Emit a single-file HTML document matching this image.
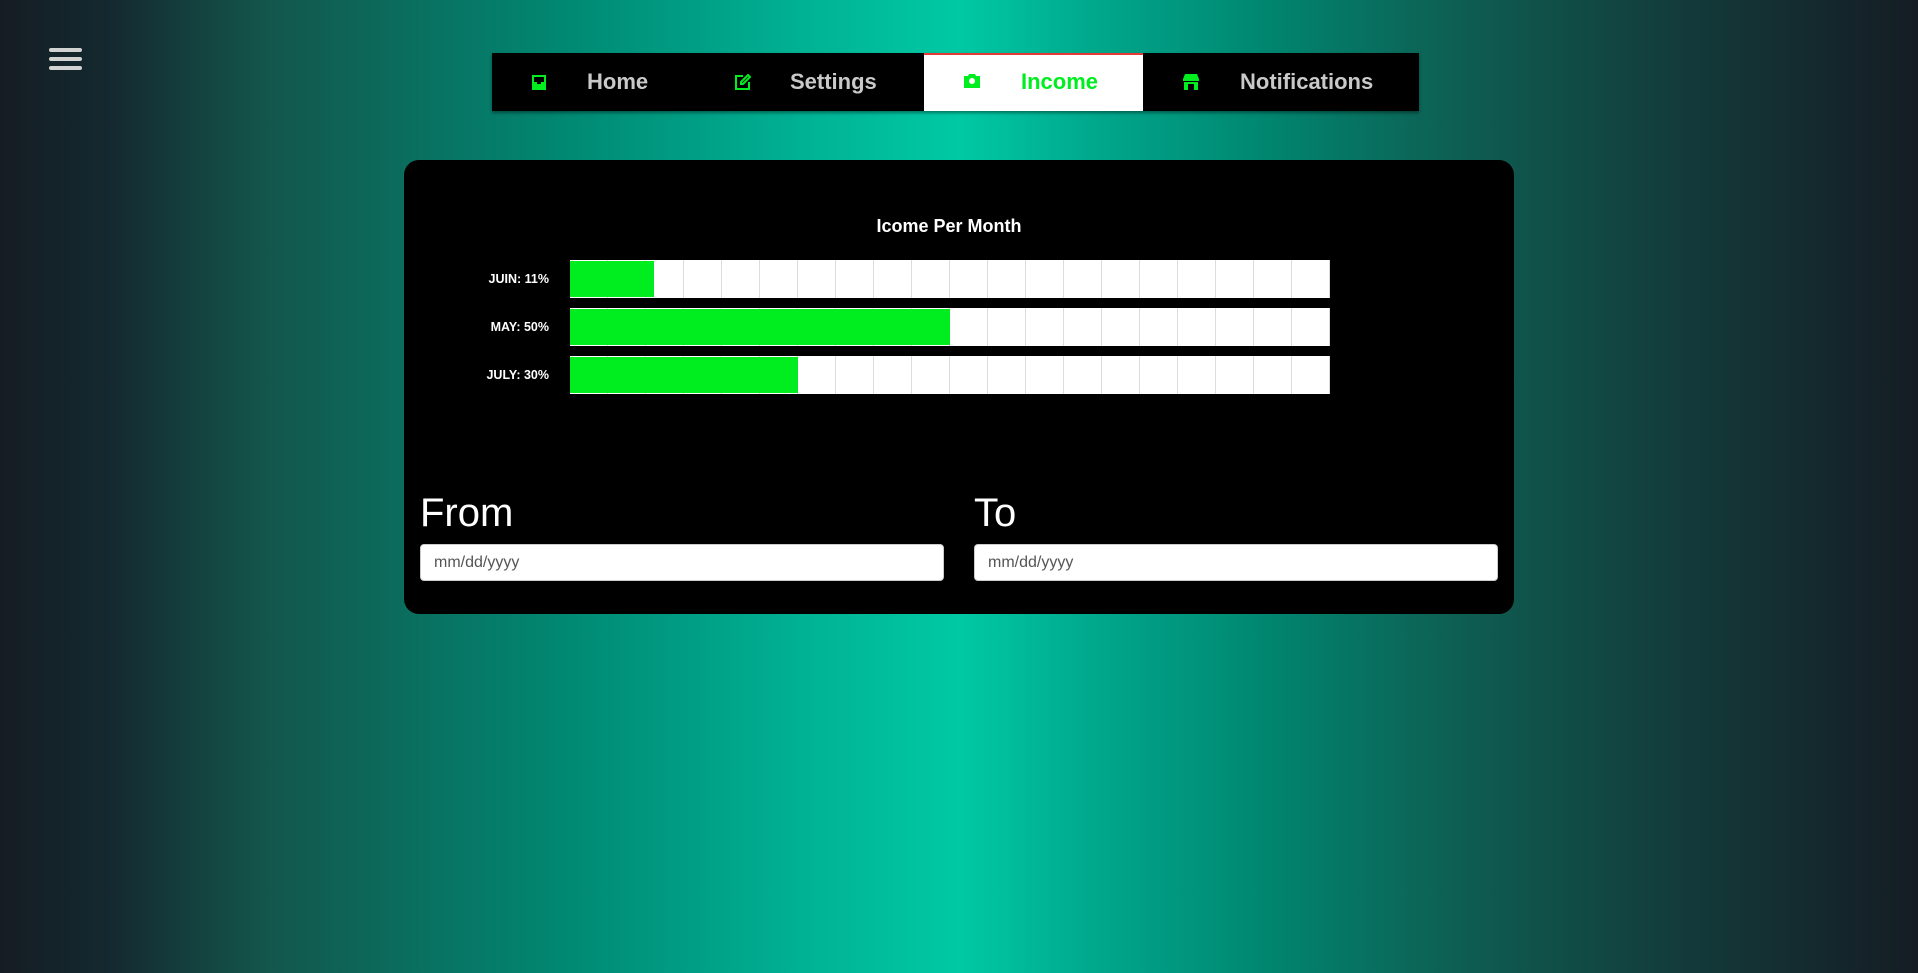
<!DOCTYPE html>
<html><head><meta charset="utf-8"><style>
*{margin:0;padding:0;box-sizing:border-box}
html,body{width:1918px;height:973px;overflow:hidden}
body{font-family:"Liberation Sans",Arial,sans-serif;position:relative;
background:linear-gradient(to right,#151c24 0%,#142a30 6%,#13564c 14%,#008a74 30%,#00b294 42%,#00c9a4 50%,#00a88c 57%,#008670 66%,#0e5e52 76%,#133a3a 88%,#151c24 100%);}
.ham{position:absolute;left:49px;width:33px;height:4px;background:#d2d2d2;border-radius:2px}
.nav{position:absolute;left:492px;top:53px;width:927px;height:58px;background:#000;box-shadow:0 2px 3px rgba(0,0,0,.4)}
.tab{position:absolute;top:0;height:58px}
.tab .t{position:absolute;top:16px;font-size:22px;font-weight:bold;color:#c9c9c9;line-height:26px;white-space:nowrap}
.tab svg{position:absolute;top:21px}
.active{background:#fff;border-top:2px solid #e53935}
.card{position:absolute;left:404px;top:160px;width:1110px;height:454px;background:#000;border-radius:15px}
.title{position:absolute;left:-10px;width:100%;top:56px;text-align:center;color:#fff;font-weight:bold;font-size:18px}
.lbl{position:absolute;right:965px;font-size:12.5px;font-weight:bold;color:#fff;width:120px;text-align:right}
.bar{position:absolute;left:166px;width:760px;height:38px;background:#fff;
background-image:repeating-linear-gradient(to right,transparent 0,transparent 37px,#dcdcdc 37px,#dcdcdc 38px)}
.bar i{position:absolute;left:0;top:1px;bottom:1px;background:#00ee20}
.h{position:absolute;top:330px;color:#fff;font-size:40px;line-height:46px}
.inp{position:absolute;top:384px;width:524px;height:37px;background:#fff;border-radius:4px;border:1px solid #ccc;font-size:16px;color:#555;padding:9px 0 0 13px}
</style></head><body>
<div class="ham" style="top:48px"></div>
<div class="ham" style="top:57px"></div>
<div class="ham" style="top:66px"></div>

<div class="nav">
 <div class="tab" style="left:0;width:220px">
  <svg style="left:39px" width="16" height="16" viewBox="0 0 16 16"><path fill="#00ee20" fill-rule="evenodd" d="M1 1h14v15H1z M3 3h10v5h-3v2H6V8H3z"/></svg>
  <div class="t" style="left:95px">Home</div>
 </div>
 <div class="tab" style="left:220px;width:212px">
  <svg style="left:23px" width="16" height="16" viewBox="0 0 16 16" fill="none" stroke="#00ee20" stroke-width="2"><path d="M8 2H1v13h13V8"/><path d="M13 1l2 2-7 7H6V8z"/></svg>
  <div class="t" style="left:78px">Settings</div>
 </div>
 <div class="tab active" style="left:432px;width:219px;top:0">
  <svg style="left:40px;top:19px" width="16" height="14" viewBox="0 0 16 14"><path fill="#00ee20" fill-rule="evenodd" d="M5 0h6l1 2h4v12H0V2h4z M8 4a3 3 0 1 0 0.01 0z"/></svg>
  <div class="t" style="left:97px;top:14px;color:#00ee20">Income</div>
 </div>
 <div class="tab" style="left:651px;width:276px">
  <svg style="left:40px" width="16" height="16" viewBox="0 0 16 16"><path fill="#00ee20" fill-rule="evenodd" d="M2 0h12l2 5v2H0V5z M1 8h14v8H1z M5 10v6h6v-6z"/></svg>
  <div class="t" style="left:97px">Notifications</div>
 </div>
</div>

<div class="card">
 <div class="title">Icome Per Month</div>
 <div class="lbl" style="top:112px">JUIN: 11%</div>
 <div class="bar" style="top:100px"><i style="width:84px"></i></div>
 <div class="lbl" style="top:160px">MAY: 50%</div>
 <div class="bar" style="top:148px"><i style="width:380px"></i></div>
 <div class="lbl" style="top:208px">JULY: 30%</div>
 <div class="bar" style="top:196px"><i style="width:228px"></i></div>
 <div class="h" style="left:16px">From</div>
 <div class="h" style="left:570px">To</div>
 <div class="inp" style="left:16px">mm/dd/yyyy</div>
 <div class="inp" style="left:570px">mm/dd/yyyy</div>
</div>
</body></html>
